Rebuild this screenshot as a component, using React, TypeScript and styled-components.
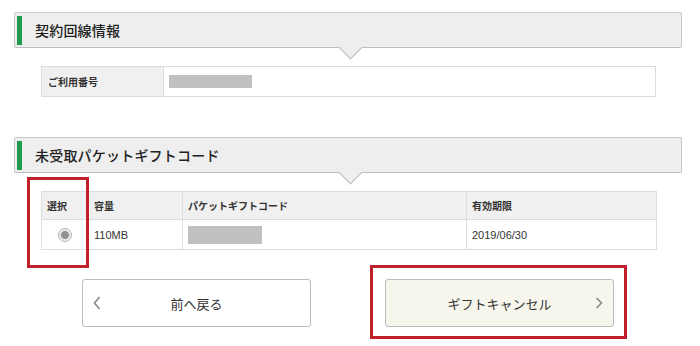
import React from "react";
import styled, { createGlobalStyle } from "styled-components";

const GlobalStyle = createGlobalStyle`
  html, body { margin: 0; padding: 0; background: #fff; }
  body {
    font-family: "Noto Sans CJK JP", "Noto Sans", "Liberation Sans", sans-serif;
    color: #333;
  }
`;

const Page = styled.div`
  position: relative;
  width: 700px;
  height: 346px;
  padding: 12px 0 0 14px;
  box-sizing: border-box;
  overflow: hidden;
`;

const Section = styled.section<{ $top?: number }>`
  margin-top: ${(p) => p.$top ?? 0}px;
`;

const Heading = styled.h2`
  position: relative;
  margin: 0;
  width: 668px;
  height: 36px;
  box-sizing: border-box;
  background: #eeeeee;
  border: 1px solid #c8c8c8;
  border-bottom-color: #bdbdbd;
  border-radius: 2px;
  display: flex;
  align-items: center;
  padding-left: 20px;
  font-size: 14px;
  font-weight: 500;
  color: #222;
  letter-spacing: 0.2px;

  &::before {
    content: "";
    position: absolute;
    left: 2px;
    top: 3px;
    bottom: 2px;
    width: 5px;
    background: #1f9a4c;
  }

  &::after {
    content: "";
    position: absolute;
    left: 327px;
    bottom: -9px;
    width: 16px;
    height: 16px;
    background: #eeeeee;
    border-right: 1px solid #bdbdbd;
    border-bottom: 1px solid #bdbdbd;
    transform: rotate(45deg);
  }
`;

const Table = styled.table`
  margin: 18px 0 0 27px;
  width: 615px;
  border-collapse: collapse;
  table-layout: fixed;
  font-size: 10px;
`;

const LabelCell = styled.th<{ $w?: number }>`
  width: ${(p) => p.$w ?? 122}px;
  height: 29px;
  padding: 0 6px;
  box-sizing: border-box;
  text-align: left;
  font-weight: 700;
  background: #f0f0f0;
  border: 1px solid #dcdcdc;
  color: #333;
`;

const ValueCell = styled.td`
  height: 29px;
  padding: 0 5px;
  border: 1px solid #dcdcdc;
  font-size: 11px;
  color: #333;
  font-family: "Liberation Sans", "Noto Sans CJK JP", sans-serif;
`;

const HeadCell = styled.th<{ $w: number }>`
  width: ${(p) => p.$w}px;
  box-sizing: border-box;
  height: 28px;
  padding: 0 5px;
  text-align: left;
  font-weight: 700;
  font-size: 10px;
  background: #f0f0f0;
  border: 1px solid #dcdcdc;
  border-bottom: 1px dotted #aaa;
  color: #333;
`;

const Masked = styled.span<{ $w: number; $h: number }>`
  display: block;
  width: ${(p) => p.$w}px;
  height: ${(p) => p.$h}px;
  background: #c0c0c0;
`;

const Radio = styled.span`
  display: block;
  margin: 0 auto;
  width: 14px;
  height: 14px;
  box-sizing: border-box;
  border-radius: 50%;
  border: 1px solid #b4b4b4;
  background: radial-gradient(circle, #939393 0 3.6px, #e9e9e9 4.4px, #f6f6f6 100%);
`;

const ButtonRow = styled.div`
  display: flex;
  gap: 74px;
  margin: 29px 0 0 68px;
`;

const Button = styled.button<{ $primary?: boolean }>`
  position: relative;
  width: 229px;
  height: 48px;
  border: 1px solid #bcbcbc;
  border-radius: 3px;
  background: ${(p) => (p.$primary ? "#f7f6ed" : "#ffffff")};
  font-family: inherit;
  font-size: 13px;
  color: #333;
  display: flex;
  align-items: center;
  justify-content: center;
  padding: 0;
  cursor: pointer;
`;

const Chevron = styled.svg<{ $side: "left" | "right" }>`
  position: absolute;
  top: 50%;
  transform: translateY(-50%);
  ${(p) => (p.$side === "left" ? "left: 10px;" : "right: 10px;")}
`;

const Highlight = styled.div<{ $x: number; $y: number; $w: number; $h: number }>`
  position: absolute;
  left: ${(p) => p.$x}px;
  top: ${(p) => p.$y}px;
  width: ${(p) => p.$w}px;
  height: ${(p) => p.$h}px;
  box-sizing: border-box;
  border: 3px solid #c01f2c;
  pointer-events: none;
`;

export default function App() {
  return (
    <>
      <GlobalStyle />
      <Page>
        <Section>
          <Heading>契約回線情報</Heading>
          <Table>
            <tbody>
              <tr>
                <LabelCell>ご利用番号</LabelCell>
                <ValueCell>
                  <Masked $w={83} $h={13} />
                </ValueCell>
              </tr>
            </tbody>
          </Table>
        </Section>

        <Section $top={40}>
          <Heading>未受取パケットギフトコード</Heading>
          <Table>
            <thead>
              <tr>
                <HeadCell $w={47}>選択</HeadCell>
                <HeadCell $w={94}>容量</HeadCell>
                <HeadCell $w={284}>パケットギフトコード</HeadCell>
                <HeadCell $w={190}>有効期限</HeadCell>
              </tr>
            </thead>
            <tbody>
              <tr>
                <ValueCell>
                  <Radio />
                </ValueCell>
                <ValueCell>110MB</ValueCell>
                <ValueCell>
                  <Masked $w={74} $h={18} />
                </ValueCell>
                <ValueCell>2019/06/30</ValueCell>
              </tr>
            </tbody>
          </Table>
        </Section>

        <ButtonRow>
          <Button type="button">
            <Chevron $side="left" width="8" height="14" viewBox="0 0 8 14">
              <polyline points="6.5,1 1.5,7 6.5,13" fill="none" stroke="#8a8a8a" strokeWidth="1.6" />
            </Chevron>
            前へ戻る
          </Button>
          <Button type="button" $primary>
            ギフトキャンセル
            <Chevron $side="right" width="8" height="12" viewBox="0 0 8 12">
              <polyline points="1.5,1 6.5,6 1.5,11" fill="none" stroke="#8a8a8a" strokeWidth="1.6" />
            </Chevron>
          </Button>
        </ButtonRow>

        <Highlight $x={27} $y={177} $w={62} $h={91} />
        <Highlight $x={370} $y={265} $w={257} $h={74} />
      </Page>
    </>
  );
}
